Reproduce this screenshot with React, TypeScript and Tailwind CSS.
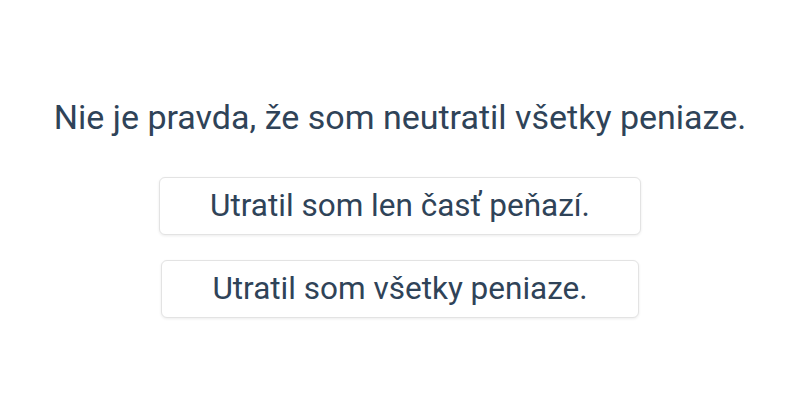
export default function App() {
  const options = ["Utratil som len časť peňazí.", "Utratil som všetky peniaze."];

  return (
    <div
      className="w-[800px] h-[400px] bg-white flex flex-col items-center pt-[96px] text-[#2f4358]"
      style={{ fontFamily: "Roboto, 'Noto Sans', sans-serif" }}
    >
      <h1 className="text-[34px] leading-[42px] font-normal">
        Nie je pravda, že som neutratil všetky peniaze.
      </h1>

      <div className="flex flex-col items-center gap-[25px] mt-[39px]">
        {options.map((o) => (
          <button
            key={o}
            className="h-[58px] px-[50px] rounded-[6px] border border-[#e3e3e3] bg-white shadow-[0_1px_3px_rgba(0,0,0,0.08)] text-[31.5px] leading-none text-[#2f4358]"
          >
            {o}
          </button>
        ))}
      </div>
    </div>
  );
}
